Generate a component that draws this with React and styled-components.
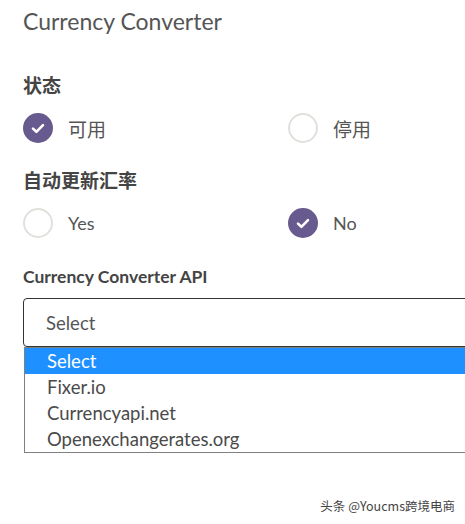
import React from 'react';
import styled, { createGlobalStyle } from 'styled-components';

const PURPLE = '#675a8f';
const TEXT = '#555';
const LABEL = '#444';

const GlobalStyle = createGlobalStyle`
  html, body {
    margin: 0;
    padding: 0;
    background: #fff;
    overflow: hidden;
  }
  body {
    font-family: Lato, "Noto Sans CJK SC", sans-serif;
    color: ${TEXT};
  }
`;

const Page = styled.div`
  position: relative;
  width: 465px;
  height: 524px;
  overflow: hidden;
`;

const Form = styled.div`
  width: 540px;
  padding-left: 23px;
`;

const Title = styled.h1`
  margin: 6px 0 0;
  height: 30px;
  font-size: 23px;
  line-height: 30px;
  font-weight: 400;
  color: ${TEXT};
`;

const SectionLabel = styled.div`
  margin-top: ${({ top }) => top}px;
  font-size: ${({ size }) => size || 19}px;
  line-height: ${({ lh }) => lh || 24}px;
  font-weight: 700;
  color: ${LABEL};
`;

const RadioGroup = styled.div`
  display: grid;
  grid-template-columns: 265px 265px;
  margin-top: 15px;
`;

const RadioItem = styled.label`
  display: flex;
  align-items: center;
  gap: 15px;
  height: 30px;
  font-size: 18px;
  color: ${TEXT};

  &:lang(zh) {
    font-size: 19px;
  }
`;

const Circle = styled.span`
  display: flex;
  align-items: center;
  justify-content: center;
  width: 30px;
  height: 30px;
  box-sizing: border-box;
  border-radius: 50%;
  background: ${({ checked }) => (checked ? PURPLE : '#fff')};
  border: ${({ checked }) => (checked ? 'none' : '2px solid #e2e0dc')};
`;

const Check = () => (
  <svg width="14" height="11" viewBox="0 0 14 11">
    <path d="M2 5.6 L5.4 8.8 L12 2.2" fill="none" stroke="#fff" strokeWidth="2.6" strokeLinecap="round" strokeLinejoin="round" />
  </svg>
);

const Radio = ({ checked, lang, children }) => (
  <RadioItem lang={lang}>
    <Circle checked={checked}>{checked && <Check />}</Circle>
    {children}
  </RadioItem>
);

const SelectWrap = styled.div`
  position: relative;
  margin-top: 10px;
`;

const SelectBox = styled.div`
  height: 49px;
  box-sizing: border-box;
  border: 1px solid #333;
  border-radius: 4px;
  padding-left: 22px;
  display: flex;
  align-items: center;
  font-size: 18.5px;
  color: ${TEXT};
`;

const OptionList = styled.ul`
  position: absolute;
  top: 49px;
  left: 1px;
  right: 0;
  margin: 0;
  padding: 0;
  list-style: none;
  border: 1px solid #808080;
  background: #fff;
`;

const Option = styled.li`
  height: 26px;
  line-height: 26px;
  padding-left: 22px;
  font-size: 18.5px;
  color: ${({ active }) => (active ? '#fff' : '#4a4a4a')};
  background: ${({ active }) => (active ? '#1e90ff' : '#fff')};
`;

const Watermark = styled.div`
  position: absolute;
  right: 10px;
  bottom: 9px;
  font-family: "Noto Sans CJK SC", sans-serif;
  font-size: 12.5px;
  color: #444;
  text-shadow: 0 0 2px #fff;
`;

const options = ['Select', 'Fixer.io', 'Currencyapi.net', 'Openexchangerates.org'];

export default function App() {
  return (
    <Page>
      <GlobalStyle />
      <Form>
        <Title>Currency Converter</Title>

        <SectionLabel top={38}>状态</SectionLabel>
        <RadioGroup>
          <Radio checked lang="zh">可用</Radio>
          <Radio lang="zh">停用</Radio>
        </RadioGroup>

        <SectionLabel top={26}>自动更新汇率</SectionLabel>
        <RadioGroup>
          <Radio>Yes</Radio>
          <Radio checked>No</Radio>
        </RadioGroup>

        <SectionLabel top={28} size={17.5} lh={22}>Currency Converter API</SectionLabel>
        <SelectWrap>
          <SelectBox>Select</SelectBox>
          <OptionList>
            {options.map((o, i) => (
              <Option key={o} active={i === 0}>{o}</Option>
            ))}
          </OptionList>
        </SelectWrap>
      </Form>
      <Watermark>头条 @Youcms跨境电商</Watermark>
    </Page>
  );
}
